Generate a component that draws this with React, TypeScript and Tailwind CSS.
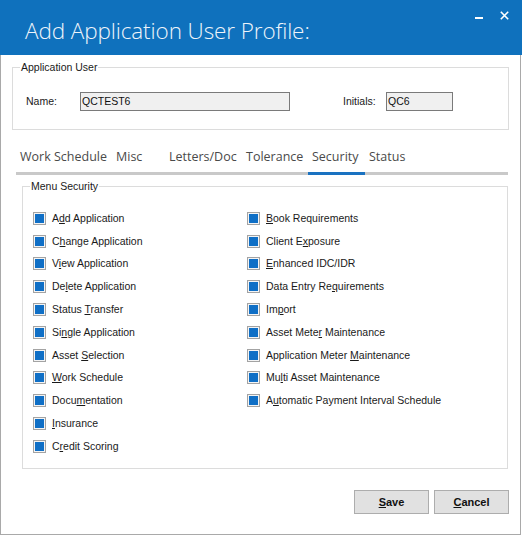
import React from "react";

type Item = { pre: string; key: string; post: string };

const leftItems: Item[] = [
  { pre: "A", key: "d", post: "d Application" },
  { pre: "C", key: "h", post: "ange Application" },
  { pre: "V", key: "i", post: "ew Application" },
  { pre: "De", key: "l", post: "ete Application" },
  { pre: "Status ", key: "T", post: "ransfer" },
  { pre: "Si", key: "n", post: "gle Application" },
  { pre: "Asset ", key: "S", post: "election" },
  { pre: "", key: "W", post: "ork Schedule" },
  { pre: "Docu", key: "m", post: "entation" },
  { pre: "", key: "I", post: "nsurance" },
  { pre: "C", key: "r", post: "edit Scoring" },
];

const rightItems: Item[] = [
  { pre: "", key: "B", post: "ook Requirements" },
  { pre: "Client E", key: "x", post: "posure" },
  { pre: "", key: "E", post: "nhanced IDC/IDR" },
  { pre: "Data Entry Re", key: "q", post: "uirements" },
  { pre: "Im", key: "p", post: "ort" },
  { pre: "Asset Mete", key: "r", post: " Maintenance" },
  { pre: "Application Meter ", key: "M", post: "aintenance" },
  { pre: "Mu", key: "l", post: "ti Asset Maintenance" },
  { pre: "A", key: "u", post: "tomatic Payment Interval Schedule" },
];

const tabs = [
  { label: "Work Schedule", w: "w-[96px]" },
  { label: "Misc", w: "w-[53px]" },
  { label: "Letters/Doc", w: "w-[77px]" },
  { label: "Tolerance", w: "w-[66px]" },
  { label: "Security", w: "w-[57px]", active: true },
  { label: "Status", w: "w-[52px]" },
];

function CheckRow({ item }: { item: Item }) {
  return (
    <div className="flex h-[22.8px] items-center">
      <span className="flex size-[13px] items-center justify-center border border-[#a3a3a3] bg-[#f4f4f4]">
        <span className="size-[9px] bg-[#0f6fc6]" />
      </span>
      <span className="ml-[6px] whitespace-nowrap text-[#1a1a1a]">
        {item.pre}
        <u className="underline-offset-1">{item.key}</u>
        {item.post}
      </span>
    </div>
  );
}

export default function App() {
  return (
    <div
      className="h-[536px] w-[522px] bg-white text-[10.5px] leading-[13px]"
      style={{ fontFamily: '"Liberation Sans", Arial, sans-serif' }}
    >
      {/* title bar */}
      <div className="relative flex h-[55px] w-[522px] items-start bg-[#0f71bd]">
        <h1
          className="ml-[25px] mt-[17px] text-[22.5px] font-light leading-[28px] tracking-[-0.1px] text-[#eef4fa]"
          style={{ fontFamily: '"Open Sans", "Noto Sans", sans-serif' }}
        >
          Add Application User Profile:
        </h1>
        <div className="absolute right-[13px] top-[10px] flex items-center gap-[17px]">
          <svg width="8" height="10" viewBox="0 0 8 10">
            <rect x="0" y="7" width="8" height="2" fill="#ffffff" />
          </svg>
          <svg width="9" height="9" viewBox="0 0 9 9">
            <path d="M0.8 0.8 L8.2 8.2 M8.2 0.8 L0.8 8.2" stroke="#ffffff" strokeWidth="1.6" />
          </svg>
        </div>
      </div>

      {/* body */}
      <div className="h-[480px] w-[521px] border-x border-b border-[#a9a9a9] pt-[6px]">
        <fieldset className="ml-[11px] h-[69px] w-[497px] border border-[#dcdcdc]">
          <legend className="ml-[7px] px-[1px] text-[#1a1a1a]">Application User</legend>
          <div className="flex items-center pl-[13px] pt-[18px]">
            <span className="w-[54px] text-[#1a1a1a]">Name:</span>
            <div className="flex h-[19px] w-[210px] items-center border border-[#7a7a7a] bg-[#f0f0f0] pl-[1px] text-[#111]">
              QCTEST6
            </div>
            <span className="ml-[53px] w-[43px] text-[#1a1a1a]">Initials:</span>
            <div className="flex h-[19px] w-[67px] items-center border border-[#7a7a7a] bg-[#f0f0f0] pl-[1px] text-[#111]">
              QC6
            </div>
          </div>
        </fieldset>

        {/* tabs */}
        <div
          className="ml-[15px] mt-[18px] flex w-[492px] text-[12.5px] leading-[18px] text-[#4a4a4a]"
          style={{ fontFamily: '"Open Sans", "Noto Sans", sans-serif' }}
        >
          {tabs.map((t) => (
            <div
              key={t.label}
              className={`${t.w} border-b-[3px] pb-[6px] pl-[4px] whitespace-nowrap ${
                t.active ? "border-[#1a72c1]" : "border-[#c9c9c9]"
              }`}
            >
              {t.label}
            </div>
          ))}
          <div className="flex-1 border-b-[3px] border-[#c9c9c9]" />
        </div>

        <fieldset className="ml-[21px] mt-[5px] h-[289px] w-[486px] border border-[#dcdcdc]">
          <legend className="ml-[7px] px-[1px] text-[#1a1a1a]">Menu Security</legend>
          <div className="flex pl-[10px] pt-[14px]">
            <div className="w-[214px]">
              {leftItems.map((it) => (
                <CheckRow key={it.pre + it.key + it.post} item={it} />
              ))}
            </div>
            <div>
              {rightItems.map((it) => (
                <CheckRow key={it.pre + it.key + it.post} item={it} />
              ))}
            </div>
          </div>
        </fieldset>

        <div className="mr-[11px] mt-[21px] flex justify-end gap-[5px]">
          <button className="h-[24px] w-[75px] border border-[#adadad] bg-[#e1e1e1] text-[11px] font-bold text-[#111]">
            <u>S</u>ave
          </button>
          <button className="h-[24px] w-[75px] border border-[#adadad] bg-[#e1e1e1] text-[11px] font-bold text-[#111]">
            <u>C</u>ancel
          </button>
        </div>
      </div>
    </div>
  );
}
